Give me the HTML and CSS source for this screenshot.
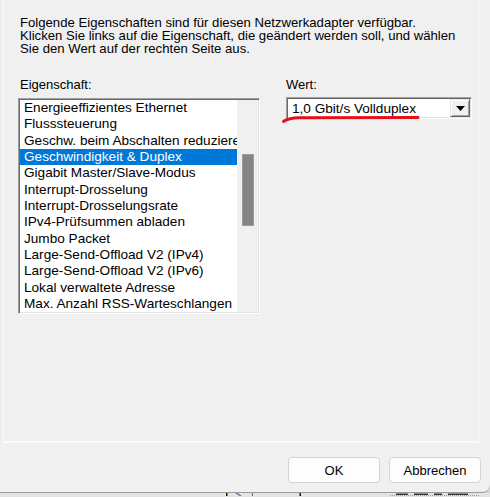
FILE: index.html
```html
<!DOCTYPE html>
<html lang="de">
<head>
<meta charset="utf-8">
<title>Erweitert</title>
<link rel="stylesheet" href="styles.css">
</head>
<body>
<div class="screen">
  <div class="dialog">
    <div class="panel">
      <div class="intro">
        <div class="intro-line">Folgende Eigenschaften sind für diesen Netzwerkadapter verfügbar.</div>
        <div class="intro-line">Klicken Sie links auf die Eigenschaft, die geändert werden soll, und wählen</div>
        <div class="intro-line">Sie den Wert auf der rechten Seite aus.</div>
      </div>
      <div class="cols">
        <div class="col-left">
          <div class="label label-left">Eigenschaft:</div>
          <div class="listbox">
            <ul class="items">
              <li>Energieeffizientes Ethernet</li>
              <li>Flusssteuerung</li>
              <li>Geschw. beim Abschalten reduzieren</li>
              <li class="selected">Geschwindigkeit &amp; Duplex</li>
              <li>Gigabit Master/Slave-Modus</li>
              <li>Interrupt-Drosselung</li>
              <li>Interrupt-Drosselungsrate</li>
              <li>IPv4-Prüfsummen abladen</li>
              <li>Jumbo Packet</li>
              <li>Large-Send-Offload V2 (IPv4)</li>
              <li>Large-Send-Offload V2 (IPv6)</li>
              <li>Lokal verwaltete Adresse</li>
              <li>Max. Anzahl RSS-Warteschlangen</li>
            </ul>
            <div class="vscroll"><div class="thumb"></div></div>
          </div>
        </div>
        <div class="col-right">
          <div class="label">Wert:</div>
          <div class="combo">
            <span class="combo-text">1,0 Gbit/s Vollduplex</span>
            <span class="combo-btn"><svg width="9" height="5" viewBox="0 0 9 5"><path d="M0 0H9L4.5 5Z" fill="#000"/></svg></span>
          </div>
        </div>
      </div>
    </div>
    <div class="buttons">
      <button class="btn">OK</button>
      <button class="btn">Abbrechen</button>
    </div>
    <svg class="markup" width="490" height="497" viewBox="0 0 490 497"><path d="M283.5 121.5 C 287 119, 291 118, 299 117.8 L 418 117.5" fill="none" stroke="#e3101a" stroke-width="3" stroke-linecap="round"/></svg>
  </div>
  <div class="desk">
    <svg width="490" height="3" viewBox="0 0 490 3">
      <rect x="226" y="0" width="1.5" height="3" fill="#111"/>
      <path d="M236 0 L241 3" stroke="#3a6fb0" stroke-width="1.2"/>
      <rect x="252" y="0" width="1" height="3" fill="#3a6fb0"/>
      <rect x="299.5" y="0" width="1.5" height="3" fill="#111"/>
      <rect x="396" y="0.5" width="12" height="1.5" fill="#333"/>
      <rect x="414" y="0.5" width="14" height="1.5" fill="#333"/>
      <rect x="434" y="0.5" width="8" height="1.5" fill="#333"/>
      <rect x="448" y="0.5" width="20" height="1.5" fill="#333"/>
      <line x1="390" y1="2.5" x2="480" y2="2.5" stroke="#e08080" stroke-width="1" stroke-dasharray="1 1"/>
    </svg>
  </div>
</div>
</body>
</html>
```
FILE: styles.css
```css
html, body {
  margin: 0;
  padding: 0;
}
body {
  width: 490px;
  height: 497px;
  overflow: hidden;
  background: #d6d6d6;
  font-family: "Liberation Sans", Arial, sans-serif;
  font-size: 13px;
  color: #000;
}
.screen {
  width: 490px;
  height: 497px;
  overflow: hidden;
}
.dialog {
  position: relative;
  display: flow-root;
  height: 493px;
  box-sizing: border-box;
  background: #f0f0f0;
  border-bottom: 1px solid #9c9c9c;
  border-bottom-right-radius: 8px;
}
.panel {
  box-sizing: border-box;
  margin: -10px 0 0 3px;
  width: 476px;
  height: 453px;
  border: 1px solid #fbfbfb;
  border-width: 1px 1px 2px 1px;
  padding: 25px 0 0 16px;
}
.intro {
  font-size: 13.15px;
}
.intro-line {
  height: 13px;
  line-height: 13px;
  white-space: nowrap;
}
.cols {
  display: flex;
  margin: 23px 0 0 -2px;
}
.col-left {
  width: 242px;
  display: flex;
  flex-direction: column;
}
.col-right {
  width: 186px;
  margin-left: 26px;
  display: flex;
  flex-direction: column;
}
.label {
  line-height: 13px;
  height: 13px;
}
.label-left {
  padding-left: 2px;
}
.listbox {
  margin-top: 7px;
  height: 216px;
  box-sizing: border-box;
  display: flex;
  border-style: solid;
  border-width: 1px;
  border-color: #a0a0a0 #ffffff #ffffff #a0a0a0;
  box-shadow: inset 1px 1px 0 #696969, inset -1px -1px 0 #e3e3e3;
  padding: 1px;
}
.items {
  list-style: none;
  margin: 0;
  padding: 0;
  width: 217px;
  height: 212px;
  overflow: hidden;
  background: #fff;
  font-size: 13.6px;
}
.items li {
  height: 16.33px;
  line-height: 16.33px;
  padding-left: 4px;
  white-space: nowrap;
  overflow: hidden;
}
.items li.selected {
  background: #0078d7;
  color: #fff;
}
.vscroll {
  width: 21px;
  height: 212px;
  background: #f0f0f0;
  box-sizing: border-box;
  padding: 54px 0 0 5px;
}
.thumb {
  width: 12px;
  height: 72px;
  box-sizing: border-box;
  background: #858585;
  border: 1px solid #9a9a9a;
}
.combo {
  margin-top: 6px;
  height: 22px;
  box-sizing: border-box;
  display: flex;
  align-items: stretch;
  background: #fff;
  border-style: solid;
  border-width: 1px;
  border-color: #a0a0a0 #ffffff #ffffff #a0a0a0;
  box-shadow: inset 1px 1px 0 #696969, inset -1px -1px 0 #e3e3e3;
  padding: 1px;
}
.combo-text {
  flex: 1;
  padding-left: 4px;
  line-height: 19px;
  font-size: 13.6px;
  white-space: nowrap;
}
.combo-btn {
  width: 20px;
  box-sizing: border-box;
  display: flex;
  align-items: center;
  justify-content: center;
  background: #f0f0f0;
  border-style: solid;
  border-width: 1px;
  border-color: #e3e3e3 #696969 #696969 #e3e3e3;
  box-shadow: inset 1px 1px 0 #ffffff, inset -1px -1px 0 #a0a0a0;
}
.buttons {
  display: flex;
  justify-content: flex-end;
  gap: 9px;
  margin-top: 14px;
  padding-right: 9px;
}
.btn {
  width: 92px;
  height: 26px;
  box-sizing: border-box;
  background: #fdfdfd;
  border: 1px solid #d4d4d4;
  border-radius: 4px;
  font-family: "Liberation Sans", Arial, sans-serif;
  font-size: 13px;
  color: #000;
  padding: 0;
}
.markup {
  position: absolute;
  left: 0;
  top: 0;
  pointer-events: none;
}
.desk {
  height: 4px;
  background: #e4e4e4;
}
.desk svg {
  display: block;
}
```
